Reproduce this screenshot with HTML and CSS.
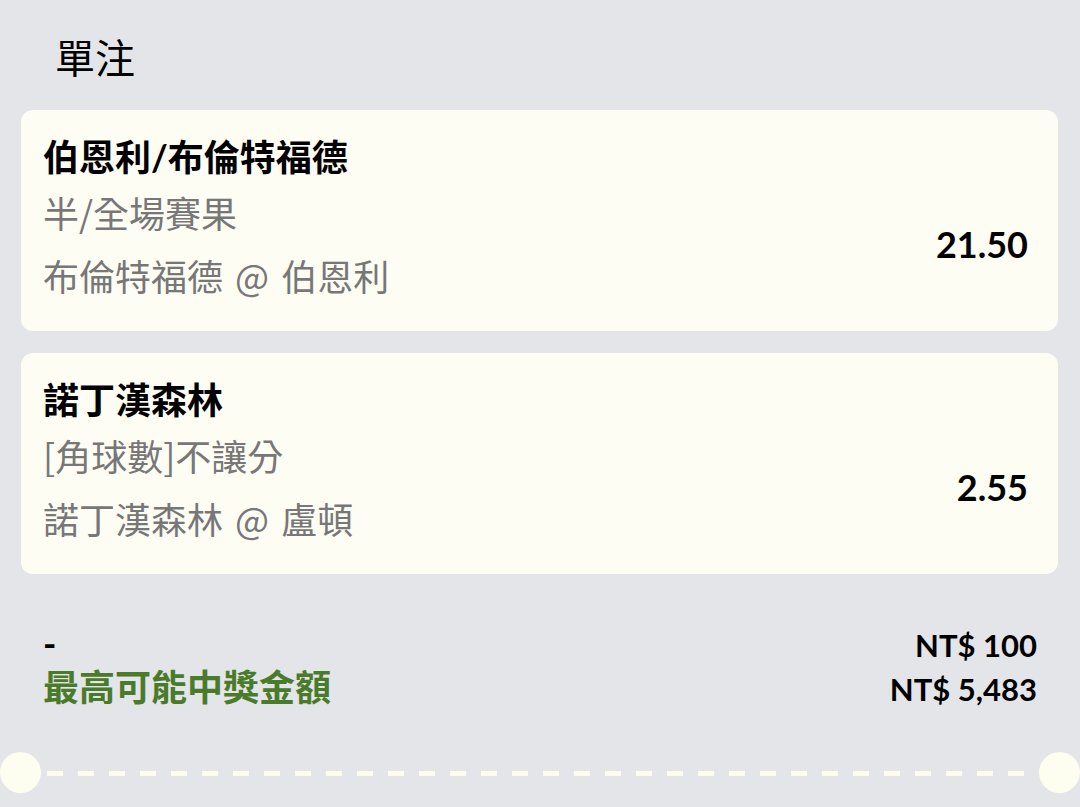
FILE: index.html
```html
<!DOCTYPE html>
<html lang="zh-Hant">
<head>
  <meta charset="UTF-8">
  <meta name="viewport" content="width=device-width, initial-scale=1.0">
  <title>單注</title>
  <link rel="stylesheet" href="styles.css">
</head>
<body>
  <div class="slip">
    <h1 class="slip-title">單注</h1>

    <div class="bets">
      <div class="bet-card">
        <div class="bet-info">
          <div class="bet-match">伯恩利/布倫特福德</div>
          <div class="bet-market">半/全場賽果</div>
          <div class="bet-pick">布倫特福德 @ 伯恩利</div>
        </div>
        <div class="bet-odds">21.50</div>
      </div>

      <div class="bet-card">
        <div class="bet-info">
          <div class="bet-match">諾丁漢森林</div>
          <div class="bet-market">[角球數]不讓分</div>
          <div class="bet-pick">諾丁漢森林 @ 盧頓</div>
        </div>
        <div class="bet-odds">2.55</div>
      </div>
    </div>

    <div class="summary">
      <div class="summary-row stake">
        <span class="summary-label">-</span>
        <span class="summary-value">NT$ 100</span>
      </div>
      <div class="summary-row payout">
        <span class="summary-label">最高可能中獎金額</span>
        <span class="summary-value">NT$ 5,483</span>
      </div>
    </div>

    <!-- ticket tear line -->
    <div class="tear">
      <span class="tear-hole"></span>
      <span class="tear-line"></span>
      <span class="tear-hole"></span>
    </div>
  </div>
</body>
</html>
```

FILE: styles.css
```css
body {
  margin: 0;
  padding: 0;
  background-color: #e4e5e8;
  font-family: Lato, "Noto Sans CJK TC", sans-serif;
  color: #000;
}
.slip {
  padding-top: 30px;
}
.slip-title {
  margin: 0;
  padding-left: 55px;
  font-size: 40px;
  line-height: 56px;
  font-weight: 400;
}
.bets {
  display: flex;
  flex-direction: column;
  gap: 22px;
  margin: 24px 22px 0 21px;
}
.bet-card {
  display: flex;
  justify-content: space-between;
  padding: 20px 30px 28px 22px;
  background-color: #fdfdf3;
  border-radius: 12px;
}
.bet-info {
  font-size: 36px;
  line-height: 55px;
}
.bet-match {
  font-weight: 700;
}
.bet-market,
.bet-pick {
  color: #777777;
  font-family: "Noto Sans CJK TC", sans-serif;
}
.bet-pick {
  margin-top: 8px;
  word-spacing: 4px;
}
.bet-odds {
  align-self: center;
  margin-top: 56px;
  font-size: 36px;
  line-height: 55px;
  font-weight: 700;
}
.summary {
  margin-top: 49px;
  padding: 0 43px;
}
.summary-row {
  display: flex;
  justify-content: space-between;
  align-items: baseline;
  font-weight: 700;
}
.summary-row .summary-value {
  font-size: 31px;
}
.stake {
  font-size: 31px;
  line-height: 40px;
}
.stake .summary-label {
  font-size: 36px;
}
.payout {
  line-height: 45px;
}
.payout .summary-label {
  font-size: 36px;
  color: #4a7b2b;
}
.tear {
  display: flex;
  align-items: center;
  margin-top: 40px;
}
.tear-hole {
  width: 41px;
  height: 41px;
  border-radius: 50%;
  background-color: #fdfdf0;
  flex-shrink: 0;
}
.tear-line {
  flex: 1;
  height: 5px;
  margin: 2px 5px 0 6px;
  background: repeating-linear-gradient(to right, #fdfcef 0 16px, transparent 16px 31px);
}
```
